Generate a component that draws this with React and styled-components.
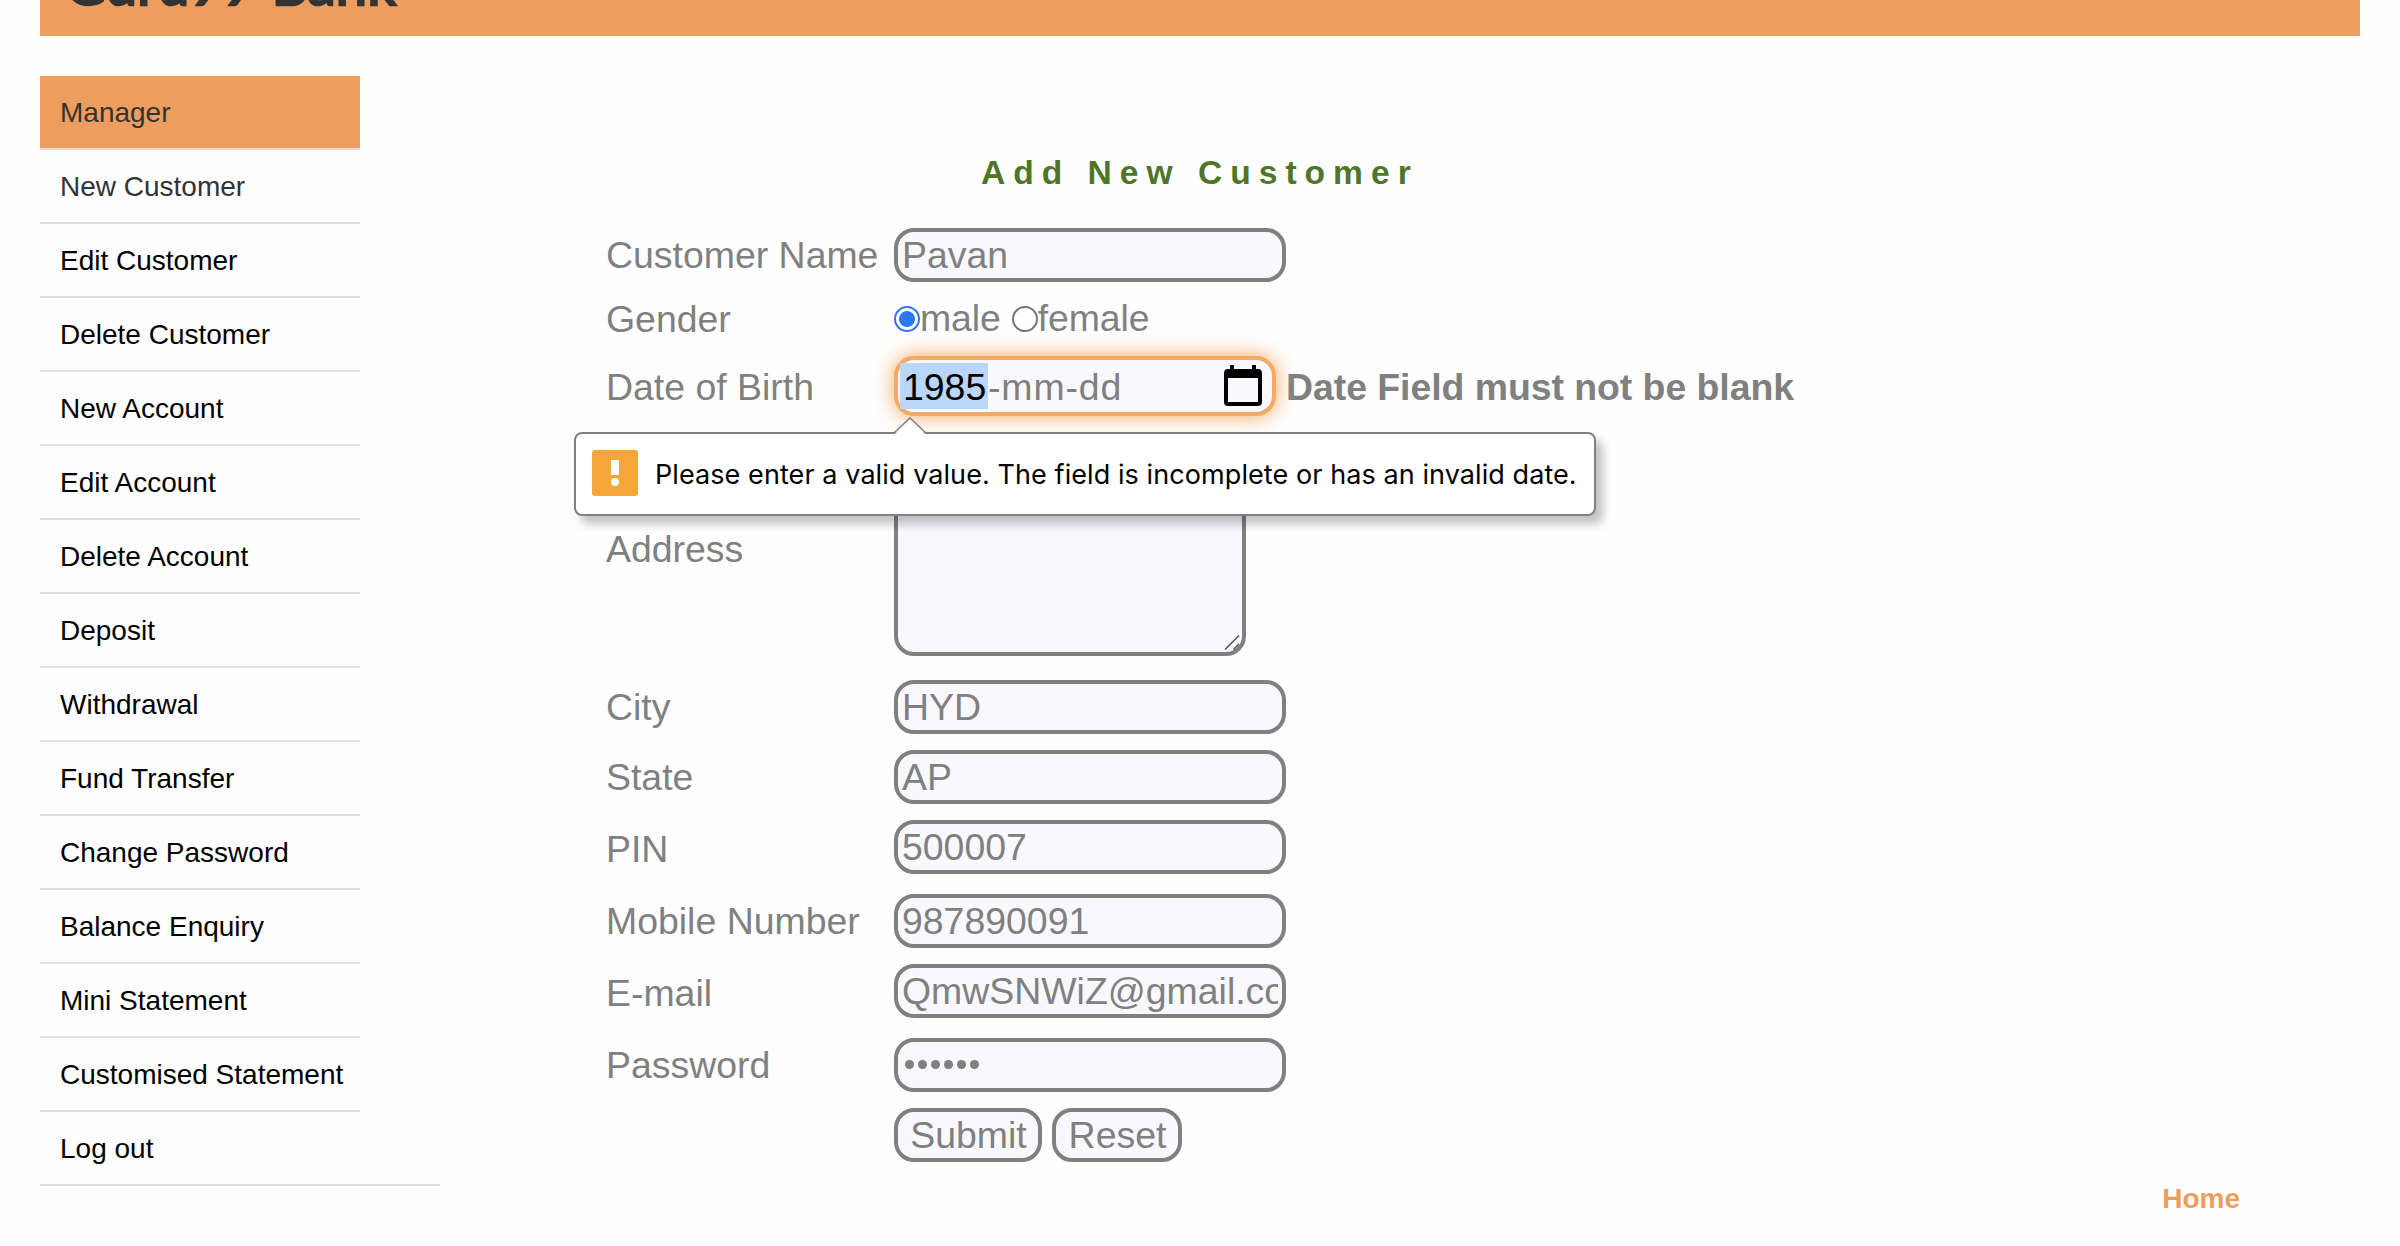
import React from "react";
import styled, { createGlobalStyle } from "styled-components";

const ACCENT = "#ed9e5e";
const GRAY = "#808080";
const FIELD = "#f9f8ff";

const GlobalStyle = createGlobalStyle`
  *, *::before, *::after { box-sizing: border-box; }
  html, body { margin: 0; height: 100%; overflow: hidden; background: #fefefe; }
  body { font-family: "Liberation Sans", Arial, sans-serif; }
`;

const Page = styled.div`
  height: 1246px;
  padding: 0 40px;
  overflow: hidden;
`;

const Header = styled.header`
  height: 36px;
  background: ${ACCENT};
  display: flex;
  align-items: flex-end;
  padding: 0 0 20px 25px;
`;

const Brand = styled.h1`
  margin: 0;
  font-family: Lato, sans-serif;
  font-size: 56px;
  line-height: 64px;
  font-weight: 400;
  letter-spacing: 0.3px;
  word-spacing: 2px;
  color: #333;
  -webkit-text-stroke: 2.5px #333;
  stroke-linejoin: round;
  white-space: nowrap;
`;

const Columns = styled.div`
  display: flex;
  margin-top: 40px;
  height: 1170px;
`;

const Menu = styled.ul`
  list-style: none;
  margin: 0;
  padding: 0;
  width: 400px;
  flex: none;
`;

const MenuItem = styled.li`
  width: ${(p) => (p.$wide ? 400 : 320)}px;
  height: 74px;
  padding: 0 20px;
  border-bottom: 2px solid #dfdfdf;
  background: ${(p) => (p.$title ? ACCENT : "transparent")};
  background-clip: padding-box;
  color: ${(p) => (p.$dark ? "#333" : "#000")};
  font-size: 28px;
  line-height: 73px;
  white-space: nowrap;
`;

const Main = styled.main`
  flex: 1;
  display: flex;
  flex-direction: column;
  padding: 76px 0 0 166px;
`;

const Title = styled.h2`
  margin: 0 0 0 375px;
  padding-top: 1px;
  height: 76px;
  font-size: 33.6px;
  line-height: 40px;
  letter-spacing: 8px;
  color: #4f7628;
`;

const FormRow = styled.div`
  display: grid;
  grid-template-columns: 288px 1fr;
  height: ${(p) => p.$h}px;
  margin-bottom: ${(p) => p.$gap}px;
  color: ${GRAY};
  font-size: 37.44px;
  white-space: nowrap;
`;

const Label = styled.label`
  align-self: center;
  line-height: 44px;
  margin-top: ${(p) => p.$shift || 0}px;
`;

const Control = styled.div`
  display: flex;
  align-items: center;
  height: 100%;
`;

const Input = styled.input`
  width: 392px;
  height: 54px;
  padding: 0 4px;
  border: 4px solid ${GRAY};
  border-radius: 20px;
  background: ${FIELD};
  color: ${GRAY};
  font: 37.44px "Liberation Sans", Arial, sans-serif;
  outline: none;
`;

const Dots = styled.div`
  width: 392px;
  height: 54px;
  display: flex;
  align-items: center;
  gap: 4.6px;
  padding: 0 7px 2px;
  border: 4px solid ${GRAY};
  border-radius: 20px;
  background: ${FIELD};
`;

const Dot = styled.i`
  width: 8.5px;
  height: 9px;
  border-radius: 50%;
  background: ${GRAY};
`;

const Button = styled.button`
  width: ${(p) => p.$w}px;
  height: 54px;
  margin-right: 10px;
  padding: 0 0 0 1px;
  border: 4px solid ${GRAY};
  border-radius: 20px;
  background: ${FIELD};
  color: ${GRAY};
  font: 37.44px "Liberation Sans", Arial, sans-serif;
`;

const Radio = styled.span`
  flex: none;
  width: 26px;
  height: 26px;
  margin-left: ${(p) => p.$ml || 0}px;
  margin-top: 1px;
  border: 2px solid ${(p) => (p.$on ? "#2b77f6" : "#767676")};
  border-radius: 50%;
  background: ${(p) => (p.$on ? "radial-gradient(circle, #2b77f6 7.5px, #fff 8.3px)" : "#fff")};
`;

const RadioText = styled.span`
  padding-top: 1px;
  letter-spacing: -0.1px;
`;

const DateField = styled.div`
  position: relative;
  width: 382px;
  height: 60px;
  display: flex;
  align-items: center;
  border: 4px solid #f4aa62;
  border-radius: 20px;
  background: ${FIELD};
  box-shadow: 0 0 20px rgba(244, 160, 80, 0.95);
  padding-left: 2px;
`;

const Year = styled.span`
  width: 88px;
  height: 46px;
  padding-left: 3px;
  background: #bbd6fb;
  color: #000;
  line-height: 48px;
`;

const DateRest = styled.span`
  flex: 1;
  height: 46px;
  line-height: 48px;
  letter-spacing: 0.9px;
`;

const CalendarIcon = styled.svg`
  width: 38px;
  height: 42px;
  margin: 0 10px 1px 0;
`;

const ErrorText = styled.strong`
  margin-left: 10px;
  padding-top: 1px;
  line-height: 44px;
  letter-spacing: -0.05px;
`;

const Address = styled.div`
  display: flex;
  align-items: flex-end;
  justify-content: flex-end;
  width: 352px;
  height: 222px;
  border: 4px solid ${GRAY};
  border-radius: 20px;
  background: ${FIELD};
`;

const Bubble = styled.div`
  position: absolute;
  z-index: 2;
  top: 72px;
  left: -324px;
  width: 1022px;
  height: 84px;
  display: flex;
  align-items: center;
  padding: 0 0 2px 16px;
  background: #fff;
  border: 2px solid ${GRAY};
  border-radius: 8px;
  box-shadow: 7px 8px 10px rgba(0, 0, 0, 0.24);
`;

const BubbleArrow = styled.svg`
  position: absolute;
  top: -17px;
  left: 318px;
  width: 32px;
  height: 18px;
`;

const BubbleText = styled.span`
  margin: 3px 0 0 17px;
  font: 27px/34px Inter, sans-serif;
  letter-spacing: 0.08px;
  color: #000;
`;

const Home = styled.a`
  align-self: flex-end;
  margin: 21px 120px 0 0;
  font-size: 28px;
  line-height: 32px;
  font-weight: bold;
  color: ${ACCENT};
`;

const ITEMS = [
  "New Customer", "Edit Customer", "Delete Customer", "New Account", "Edit Account",
  "Delete Account", "Deposit", "Withdrawal", "Fund Transfer", "Change Password",
  "Balance Enquiry", "Mini Statement", "Customised Statement", "Log out",
];

const FIELDS = [
  { label: "City", value: "HYD", gap: 16 },
  { label: "State", value: "AP", gap: 16 },
  { label: "PIN", value: "500007", gap: 20, shift: 3 },
  { label: "Mobile Number", value: "987890091", gap: 16 },
  { label: "E-mail", value: "QmwSNWiZ@gmail.com", gap: 20, shift: 3 },
];

export default function App() {
  return (
    <Page>
      <GlobalStyle />
      <Header>
        <Brand>Guru99 Bank</Brand>
      </Header>
      <Columns>
        <Menu>
          <MenuItem $title $dark>Manager</MenuItem>
          {ITEMS.map((t, i) => (
            <MenuItem key={t} $dark={i === 0} $wide={t === "Log out"}>{t}</MenuItem>
          ))}
        </Menu>
        <Main>
          <Title>Add New Customer</Title>
          <FormRow $h={54} $gap={10}>
            <Label>Customer Name</Label>
            <Control><Input readOnly value="Pavan" /></Control>
          </FormRow>
          <FormRow $h={52} $gap={12}>
            <Label $shift={1}>Gender</Label>
            <Control>
              <Radio $on /><RadioText>male</RadioText>
              <Radio $ml={11} /><RadioText>female</RadioText>
            </Control>
          </FormRow>
          <FormRow $h={60} $gap={18}>
            <Label $shift={2}>Date of Birth</Label>
            <Control>
              <DateField>
                <Year>1985</Year>
                <DateRest>-mm-dd</DateRest>
                <CalendarIcon viewBox="0 0 38 42">
                  <path d="M6 0h4v4h18V0h4v4h2q4 0 4 4v29q0 4-4 4H4q-4 0-4-4V8q0-4 4-4h2zM4 13v24h30V13z" fillRule="evenodd" />
                </CalendarIcon>
                <Bubble>
                  <BubbleArrow viewBox="0 0 32 18">
                    <path d="M0 18 16 1 32 18z" fill="#fff" />
                    <path d="M0 16 16 1 32 16" fill="none" stroke={GRAY} strokeWidth="1.6" />
                  </BubbleArrow>
                  <svg width="46" height="46" viewBox="0 0 46 46">
                    <rect width="46" height="46" rx="3" fill="#f4a63b" />
                    <rect x="19" y="10" width="8" height="15" fill="#fff" />
                    <circle cx="23" cy="32" r="4" fill="#fff" />
                  </svg>
                  <BubbleText>Please enter a valid value. The field is incomplete or has an invalid date.</BubbleText>
                </Bubble>
              </DateField>
              <ErrorText>Date Field must not be blank</ErrorText>
            </Control>
          </FormRow>
          <FormRow $h={222} $gap={24}>
            <Label $shift={8}>Address</Label>
            <Control>
              <Address>
                <svg width="18" height="18" viewBox="0 0 18 18">
                  <path d="M1 15.5 15 1.500M9.500 15.500l5.500-5.500" stroke="#555" strokeWidth="1.6" />
                </svg>
              </Address>
            </Control>
          </FormRow>
          {FIELDS.map((f) => (
            <FormRow key={f.label} $h={54} $gap={f.gap}>
              <Label $shift={f.shift}>{f.label}</Label>
              <Control><Input readOnly value={f.value} /></Control>
            </FormRow>
          ))}
          <FormRow $h={54} $gap={16}>
            <Label>Password</Label>
            <Control>
              <Dots>{[0, 1, 2, 3, 4, 5].map((n) => <Dot key={n} />)}</Dots>
            </Control>
          </FormRow>
          <FormRow $h={54} $gap={0}>
            <span />
            <Control>
              <Button $w={148}>Submit</Button>
              <Button $w={130}>Reset</Button>
            </Control>
          </FormRow>
          <Home>Home</Home>
        </Main>
      </Columns>
    </Page>
  );
}
